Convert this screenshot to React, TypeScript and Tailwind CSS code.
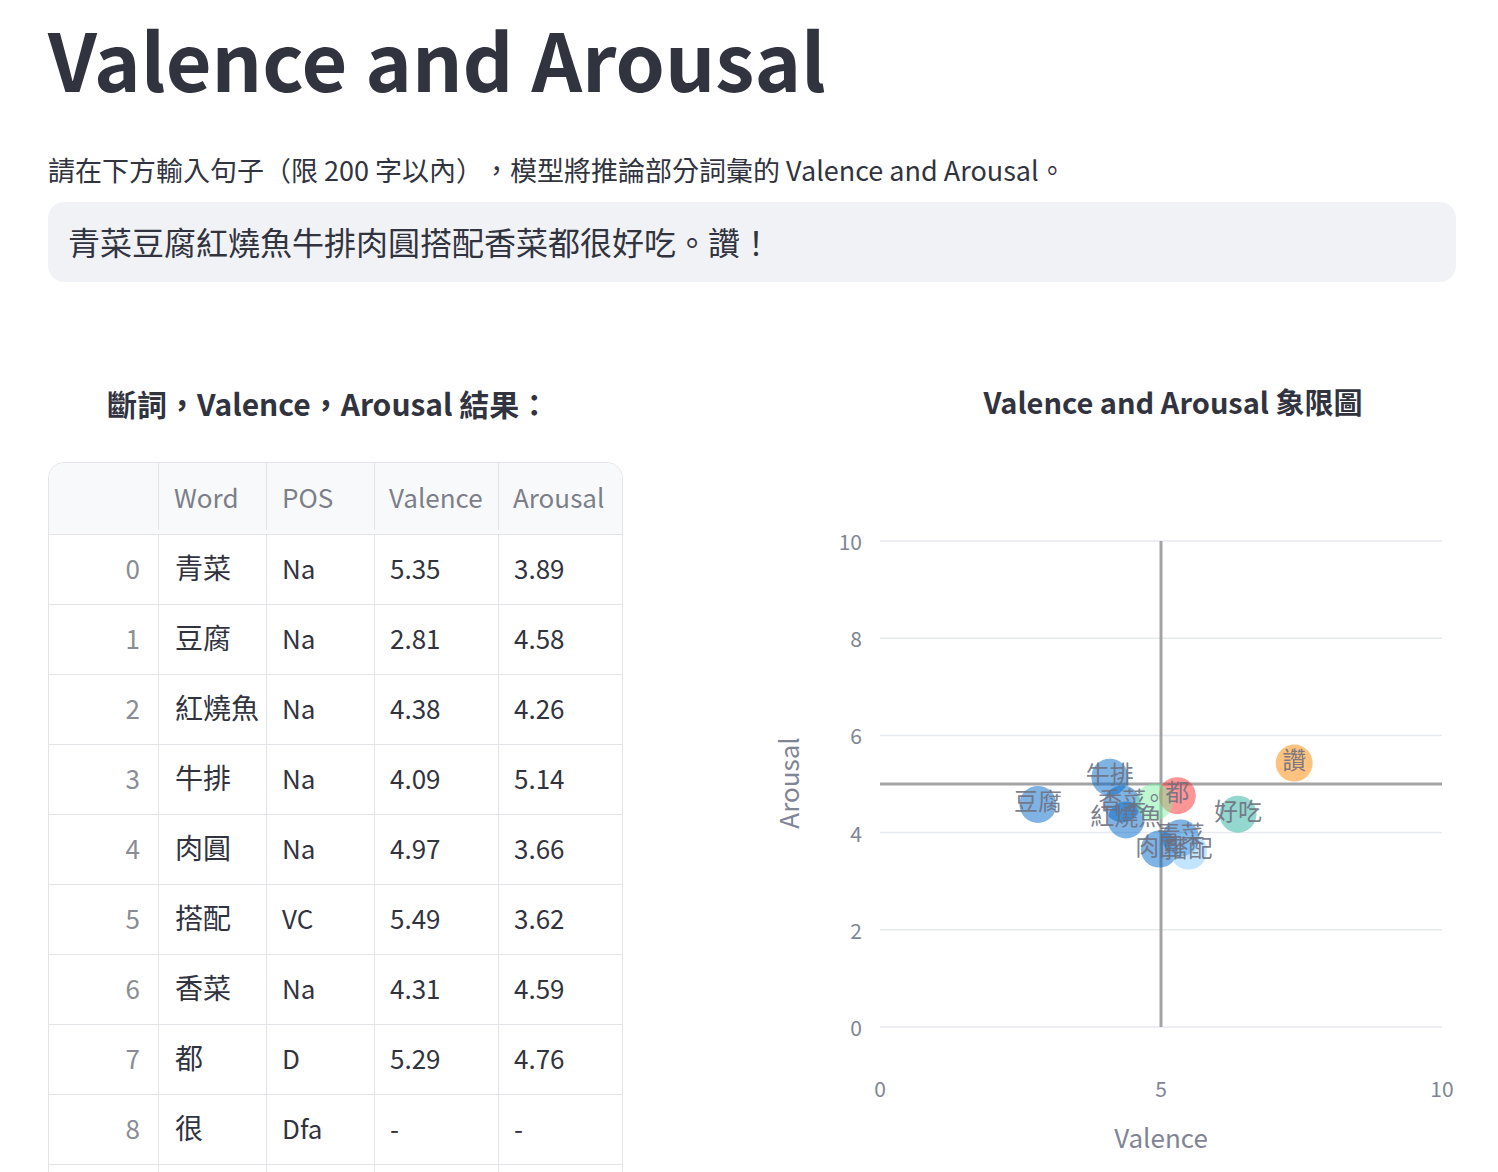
import React from 'react';

const FONT = { fontFamily: '"Noto Sans CJK TC", "Noto Sans", sans-serif' };

type Row = { idx: number; word: string; pos: string; v: string; a: string };

const ROWS: Row[] = [
  { idx: 0, word: '青菜', pos: 'Na', v: '5.35', a: '3.89' },
  { idx: 1, word: '豆腐', pos: 'Na', v: '2.81', a: '4.58' },
  { idx: 2, word: '紅燒魚', pos: 'Na', v: '4.38', a: '4.26' },
  { idx: 3, word: '牛排', pos: 'Na', v: '4.09', a: '5.14' },
  { idx: 4, word: '肉圓', pos: 'Na', v: '4.97', a: '3.66' },
  { idx: 5, word: '搭配', pos: 'VC', v: '5.49', a: '3.62' },
  { idx: 6, word: '香菜', pos: 'Na', v: '4.31', a: '4.59' },
  { idx: 7, word: '都', pos: 'D', v: '5.29', a: '4.76' },
  { idx: 8, word: '很', pos: 'Dfa', v: '-', a: '-' },
  { idx: 9, word: '好吃', pos: 'VH', v: '6.37', a: '4.38' },
  { idx: 10, word: '。', pos: 'PERIOD', v: '4.88', a: '4.63' },
  { idx: 11, word: '讚', pos: 'VK', v: '7.37', a: '5.43' },
];

// points on the chart, colour by POS
const POINTS = [
  { word: '青菜', v: 5.35, a: 3.89, color: '#0068c9' },
  { word: '豆腐', v: 2.81, a: 4.58, color: '#0068c9' },
  { word: '紅燒魚', v: 4.38, a: 4.26, color: '#0068c9' },
  { word: '牛排', v: 4.09, a: 5.14, color: '#0068c9' },
  { word: '肉圓', v: 4.97, a: 3.66, color: '#0068c9' },
  { word: '搭配', v: 5.49, a: 3.62, color: '#83c9ff' },
  { word: '香菜', v: 4.31, a: 4.59, color: '#0068c9' },
  { word: '都', v: 5.29, a: 4.76, color: '#ff2b2b' },
  { word: '好吃', v: 6.37, a: 4.38, color: '#29b09d' },
  { word: '。', v: 4.88, a: 4.63, color: '#7defa1' },
  { word: '讚', v: 7.37, a: 5.43, color: '#ff8700' },
];

const X = (v: number) => 120 + v * 56.2;
const Y = (a: number) => 604 - a * 48.6;

function Chart() {
  const ticksY = [0, 2, 4, 6, 8, 10];
  return (
    <svg width={696} height={750} className="block overflow-visible" style={FONT}>
      {ticksY.map(t => (
        <g key={t}>
          <line x1={X(0)} x2={X(10)} y1={Y(t)} y2={Y(t)} stroke="#e6e9f0" strokeWidth={1.5} />
          <text x={102} y={Y(t)} textAnchor="end" dominantBaseline="central" fontSize={21} fill="#808495">
            {t}
          </text>
        </g>
      ))}
      {[0, 5, 10].map(t => (
        <text key={t} x={X(t)} y={665} textAnchor="middle" dominantBaseline="central" fontSize={21} fill="#808495">
          {t}
        </text>
      ))}
      <text x={401} y={713} textAnchor="middle" dominantBaseline="central" fontSize={26} fill="#808495">
        Valence
      </text>
      <text
        x={27}
        y={360}
        textAnchor="middle"
        dominantBaseline="central"
        fontSize={26}
        fill="#808495"
        transform="rotate(-90 27 360)"
      >
        Arousal
      </text>

      <line x1={X(5)} x2={X(5)} y1={Y(10)} y2={Y(0)} stroke="#a3a3a3" strokeWidth={3} />
      <line x1={X(0)} x2={X(10)} y1={Y(5)} y2={Y(5)} stroke="#a3a3a3" strokeWidth={3} />

      {POINTS.map(p => (
        <circle key={p.word} cx={X(p.v)} cy={Y(p.a)} r={18.5} fill={p.color} fillOpacity={0.5} />
      ))}
      {POINTS.map(p => (
        <text
          key={p.word}
          x={X(p.v)}
          y={Y(p.a) - 5}
          textAnchor="middle"
          dominantBaseline="central"
          fontSize={24}
          fill="#6e7080"
          fillOpacity={0.9}
        >
          {p.word}
        </text>
      ))}
    </svg>
  );
}

function Table() {
  const cols = 'grid grid-cols-[110px_108px_108px_124px_123px]';
  return (
    <div className="rounded-[16px] border border-[#e4e4e8] overflow-hidden w-[575px]">
      <div className={`${cols} h-[72px] bg-[#f8f9fb] border-b border-[#e4e4e8] text-[26px] text-[#7c7f8a] pb-[4px]`}>
        <div className="border-r border-[#e4e4e8]" />
        <div className="border-r border-[#e4e4e8] pl-[15px] flex items-center">Word</div>
        <div className="border-r border-[#e4e4e8] pl-[15px] flex items-center">POS</div>
        <div className="border-r border-[#e4e4e8] pl-[14px] flex items-center">Valence</div>
        <div className="pl-[14px] flex items-center">Arousal</div>
      </div>
      {ROWS.map(r => (
        <div key={r.idx} className={`${cols} h-[70px] border-b border-[#e4e4e8] text-[26px] text-[#31333f]`}>
          <div className="border-r border-[#e4e4e8] pr-[18px] pb-[5px] flex items-center justify-end text-[#8a8c94]">{r.idx}</div>
          <div className="border-r border-[#e4e4e8] pl-[16px] pb-[5px] flex items-center whitespace-nowrap text-[28px]">{r.word}</div>
          <div className="border-r border-[#e4e4e8] pl-[15px] pb-[5px] flex items-center">{r.pos}</div>
          <div className="border-r border-[#e4e4e8] pl-[15px] pb-[5px] flex items-center">{r.v}</div>
          <div className="pl-[15px] pb-[5px] flex items-center">{r.a}</div>
        </div>
      ))}
    </div>
  );
}

export default function App() {
  return (
    <div
      className="w-[1498px] h-[1172px] overflow-hidden bg-white text-[#31333f] [text-spacing-trim:space-all]"
      style={FONT}
    >
      <div className="pl-[48px] pr-[42px] pt-[6px]">
        <h1 className="h-[104px] leading-[104px] text-[79px] font-bold whitespace-nowrap">
          Valence and Arousal
        </h1>
        <p className="mt-[40px] h-[40px] leading-[40px] text-[27px]">
          請在下方輸入句子（限 200 字以內），模型將推論部分詞彙的 Valence and Arousal。
        </p>
        <div className="mt-[12px] h-[80px] rounded-[16px] bg-[#f0f2f6] flex items-center pl-[20px] pb-[2px] text-[32px]">
          青菜豆腐紅燒魚牛排肉圓搭配香菜都很好吃。讚！
        </div>

        <div className="mt-[97px] flex">
          <div className="w-[575px] shrink-0">
            <h3 className="mt-[2px] h-[44px] leading-[44px] pl-[59px] text-[30px] font-bold whitespace-nowrap">
              斷詞，Valence，Arousal 結果：
            </h3>
            <div className="mt-[37px]">
              <Table />
            </div>
          </div>
          <div className="ml-[137px] flex-1">
            <div className="h-[44px] leading-[44px] pl-[130px] text-center text-[29px] font-bold whitespace-nowrap">
              Valence and Arousal 象限圖
            </div>
            <Chart />
          </div>
        </div>
      </div>
    </div>
  );
}
